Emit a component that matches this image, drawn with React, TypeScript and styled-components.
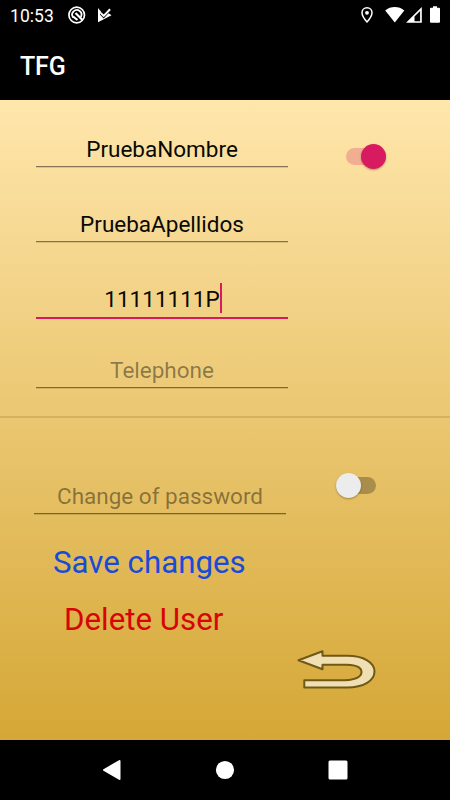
import React from "react";
import styled, { createGlobalStyle, css } from "styled-components";

const GlobalStyle = createGlobalStyle`
  * { box-sizing: border-box; }
  body { margin: 0; background: #000; font-family: Roboto, "Noto Sans", sans-serif; }
`;

const Screen = styled.div`
  width: 450px;
  height: 800px;
  display: flex;
  flex-direction: column;
  background: #000;
  overflow: hidden;
`;

const StatusBar = styled.div`
  height: 30px;
  display: flex;
  align-items: center;
  justify-content: space-between;
  color: #fff;
`;

const StatusLeft = styled.div`
  display: flex;
  align-items: center;
  padding-left: 10px;
`;

const Clock = styled.span`
  width: 57px;
  font-size: 17.5px;
  line-height: 30px;
  padding-top: 1px;
  letter-spacing: 0.05px;
`;

const Icon = styled.svg`
  display: block;
  flex: none;
`;

const AppBar = styled.header`
  height: 70px;
  padding: 0 20px;
  display: flex;
  align-items: center;
  color: #fff;
  font-size: 25px;
  font-weight: 500;
  letter-spacing: -0.15px;
`;

const Title = styled.span`
  margin-top: 2px;
`;

const Content = styled.main`
  height: 640px;
  display: flex;
  flex-direction: column;
  background: linear-gradient(#ffe6ab, #d5a736);
`;

const Profile = styled.section`
  height: 318px;
  display: flex;
  align-items: flex-start;
  border-bottom: 2px solid rgba(100, 70, 10, 0.16);
`;

const Fields = styled.div`
  width: 252px;
  margin: 34px 0 0 36px;
  display: flex;
  flex-direction: column;
`;

const Field = styled.div<{ $gap?: number; $focused?: boolean; $hint?: boolean }>`
  width: 252px;
  height: ${(p) => (p.$focused ? 35 : 33)}px;
  margin-bottom: ${(p) => p.$gap ?? 0}px;
  display: flex;
  justify-content: center;
  font-size: 22.5px;
  line-height: 31px;
  white-space: nowrap;
  color: ${(p) => (p.$hint ? "rgba(0, 0, 0, 0.42)" : "#090906")};
  border-bottom: ${(p) => (p.$focused ? "2px solid #d81b60" : "1px solid rgba(0, 0, 0, 0.48)")};
  box-shadow: 0 ${(p) => (p.$focused ? 0 : 1)}px 0 rgba(0, 0, 0, ${(p) => (p.$focused ? 0 : 0.12)});
`;

const Caret = styled.i`
  width: 2px;
  height: 30px;
  margin: -1px -2px 0 0;
  background: #d81b60;
`;

const Switch = styled.div<{ $on?: boolean }>`
  width: 40px;
  height: 25px;
  flex: none;
  display: flex;
  align-items: center;
  ${(p) =>
    p.$on
      ? css`
          margin: 44px 0 0 58px;
        `
      : css`
          margin: 55px 0 0 50px;
        `}
`;

const Track = styled.span<{ $on?: boolean }>`
  width: 40px;
  height: 17px;
  flex: none;
  border-radius: 9px;
  display: flex;
  align-items: center;
  justify-content: ${(p) => (p.$on ? "flex-end" : "flex-start")};
  background: ${(p) => (p.$on ? "#f2ae92" : "#a98d4a")};
`;

const Thumb = styled.span<{ $on?: boolean }>`
  width: 25px;
  height: 25px;
  flex: none;
  border-radius: 50%;
  background: ${(p) => (p.$on ? "#d81b60" : "#ececec")};
  box-shadow: 0 1px 2px rgba(70, 45, 0, 0.4);
`;

const PasswordRow = styled.section`
  height: 97px;
  display: flex;
  align-items: flex-start;
  padding-left: 34px;
`;

const PasswordField = styled.div`
  margin-top: 63px;
`;

const Action = styled.button<{ $tone: string; $left: number; $top: number }>`
  align-self: flex-start;
  height: 36px;
  margin: ${(p) => p.$top}px 0 0 ${(p) => p.$left}px;
  padding: 0;
  border: 0;
  background: none;
  color: ${(p) => p.$tone};
  font: 400 31.25px/36px Roboto, sans-serif;
  white-space: nowrap;
`;

const BackLink = styled.button`
  align-self: flex-start;
  margin: 10px 0 0 295px;
  padding: 0;
  border: 0;
  background: none;
`;

const NavBar = styled.nav`
  height: 60px;
  display: grid;
  grid-template-columns: repeat(3, 113px);
  justify-content: center;
  align-items: center;
  justify-items: center;
`;

export default function App() {
  return (
    <Screen>
      <GlobalStyle />
      <StatusBar>
        <StatusLeft>
          <Clock>10:53</Clock>
          <Icon width="46" height="30" viewBox="0 0 46 30" fill="none">
            <circle cx="9.7" cy="15" r="7.8" stroke="#fff" strokeWidth="1.7" />
            <path d="M6.2 17.5A4.6 4.6 0 1 1 13.8 17" stroke="#fff" strokeWidth="1.8" />
            <path d="M8.5 13 15.5 20M6 16.5l4.500 3.500" stroke="#fff" strokeWidth="2.2" />
            <path
              d="M31 8V22.300L44.500 15.200 41.500 13.200 36.700 18.400 32.800 14.500 34.300 12z"
              fill="#fff"
            />
            <path d="M33.700 13l3 2.900 6.400-6.700" stroke="#fff" strokeWidth="2" />
          </Icon>
        </StatusLeft>
        <Icon width="90" height="30" viewBox="0 0 90 30" fill="#fff">
          <path
            d="M7 7.8c-3 0-5 2.2-5 5 0 3.7 5 9.2 5 9.2s5-5.5 5-9.2c0-2.8-2-5-5-5z"
            fill="none"
            stroke="#fff"
            strokeWidth="1.5"
          />
          <circle cx="7" cy="12.8" r="1.9" />
          <path d="M25.2 10.4C30.5 5.9 39 5.9 44.3 10.4L34.8 22.5z" />
          <path
            fillRule="evenodd"
            d="M46 22.700 61.800 7v15.700zM54.500 16.500v4.700h5.600V10.900z"
          />
          <path d="M71 7.8h2V6.3h4v1.5h2q1 0 1 1v13q0 1-1 1h-8q-1 0-1-1v-13q0-1 1-1z" />
        </Icon>
      </StatusBar>
      <AppBar>
        <Title>TFG</Title>
      </AppBar>
      <Content>
        <Profile>
          <Fields>
            <Field $gap={42}>PruebaNombre</Field>
            <Field $gap={42}>PruebaApellidos</Field>
            <Field $gap={36} $focused>
              11111111P
              <Caret />
            </Field>
            <Field $hint>Telephone</Field>
          </Fields>
          <Switch $on>
            <Track $on>
              <Thumb $on />
            </Track>
          </Switch>
        </Profile>
        <PasswordRow>
          <PasswordField>
            <Field $hint>Change of password</Field>
          </PasswordField>
          <Switch>
            <Track>
              <Thumb />
            </Track>
          </Switch>
        </PasswordRow>
        <Action $tone="#184bd8" $left={53} $top={30}>
          Save changes
        </Action>
        <Action $tone="#d80404" $left={64} $top={21}>
          Delete User
        </Action>
        <BackLink aria-label="Back">
          <Icon width="84" height="44" viewBox="0 0 84 44">
            <path
              d="M3.5 12.300 27.500 3.300V7.800H52C69 7.800 79.500 14.500 79.500 23.500S69 39.500 52 39.500H9.300V32.300H50C62 31.500 66.500 29 66.500 24S62 17 52 16.700H27.500V21.200z"
              fill="#f0dfb2"
              stroke="#705817"
              strokeWidth="2"
              strokeLinejoin="round"
            />
          </Icon>
        </BackLink>
      </Content>
      <NavBar>
        <Icon width="20" height="22" viewBox="0 0 20 22">
          <path d="M2 11 17.5 2v18z" fill="#fff" stroke="#fff" strokeWidth="2" strokeLinejoin="round" />
        </Icon>
        <Icon width="20" height="20" viewBox="0 0 20 20">
          <circle cx="10" cy="10" r="9.1" fill="#fff" />
        </Icon>
        <Icon width="20" height="20" viewBox="0 0 20 20">
          <rect x=".5" y=".5" width="19" height="19" rx="1.5" fill="#fff" />
        </Icon>
      </NavBar>
    </Screen>
  );
}
